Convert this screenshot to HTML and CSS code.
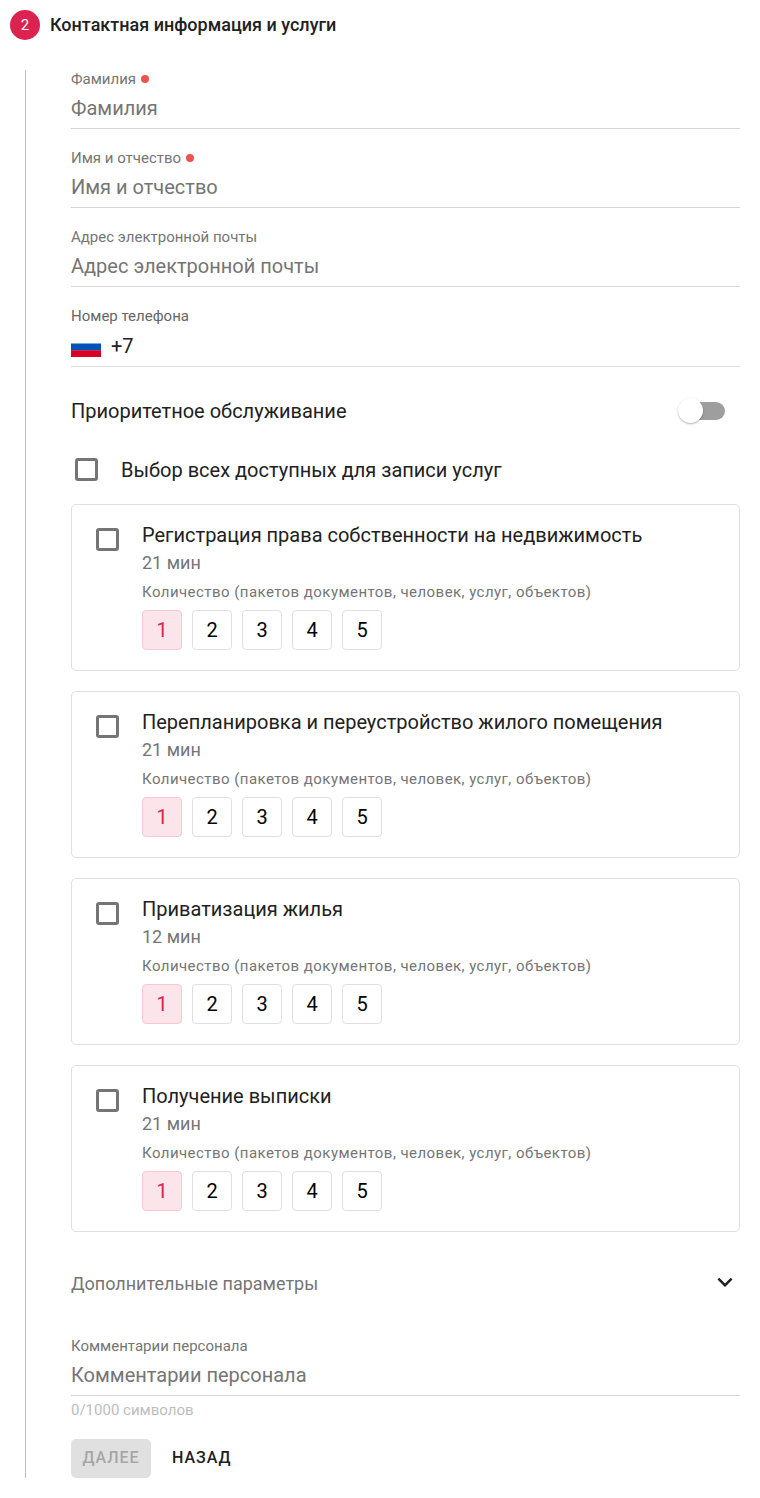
FILE: index.html
```html
<!DOCTYPE html>
<html lang="ru">
<head>
  <meta charset="utf-8" />
  <meta name="viewport" content="width=device-width, initial-scale=1.0" />
  <title>Контактная информация и услуги</title>
  <link rel="stylesheet" href="styles.css">
</head>
<body>
  <form class="step">
    <!-- Step header -->
    <div class="step-header">
      <span class="step-number">2</span>
      <h1>Контактная информация и услуги</h1>
    </div>

    <div class="step-content">
      <!-- Contact fields -->
      <div class="field">
        <label class="required" for="lastName">Фамилия</label>
        <input type="text" id="lastName" placeholder="Фамилия" />
      </div>
      <div class="field">
        <label class="required" for="firstName">Имя и отчество</label>
        <input type="text" id="firstName" placeholder="Имя и отчество" />
      </div>
      <div class="field">
        <label for="email">Адрес электронной почты</label>
        <input type="email" id="email" placeholder="Адрес электронной почты" />
      </div>
      <div class="field">
        <label class="dark" for="phone">Номер телефона</label>
        <div class="phone">
          <svg class="flag" viewBox="0 0 30 20" aria-hidden="true">
            <rect width="30" height="7" fill="#fff" />
            <rect y="6.5" width="30" height="7" fill="#0052b4" />
            <rect y="13.3" width="30" height="6.7" fill="#d80027" />
          </svg>
          <input type="tel" id="phone" value="+7" />
        </div>
      </div>

      <!-- Priority switch -->
      <div class="priority">
        <label for="priority">Приоритетное обслуживание</label>
        <input type="checkbox" class="switch" id="priority" />
      </div>

      <!-- Services -->
      <div class="select-all">
        <input type="checkbox" class="checkbox" id="selectAll" />
        <label for="selectAll">Выбор всех доступных для записи услуг</label>
      </div>

      <div class="service">
        <input type="checkbox" class="checkbox" id="service1" />
        <div class="service-info">
          <label class="service-name" for="service1">Регистрация права собственности на недвижимость</label>
          <div class="service-time">21 мин</div>
          <div class="service-hint">Количество (пакетов документов, человек, услуг, объектов)</div>
          <div class="counts">
            <button type="button" class="count active">1</button>
            <button type="button" class="count">2</button>
            <button type="button" class="count">3</button>
            <button type="button" class="count">4</button>
            <button type="button" class="count">5</button>
          </div>
        </div>
      </div>

      <div class="service">
        <input type="checkbox" class="checkbox" id="service2" />
        <div class="service-info">
          <label class="service-name" for="service2">Перепланировка и переустройство жилого помещения</label>
          <div class="service-time">21 мин</div>
          <div class="service-hint">Количество (пакетов документов, человек, услуг, объектов)</div>
          <div class="counts">
            <button type="button" class="count active">1</button>
            <button type="button" class="count">2</button>
            <button type="button" class="count">3</button>
            <button type="button" class="count">4</button>
            <button type="button" class="count">5</button>
          </div>
        </div>
      </div>

      <div class="service">
        <input type="checkbox" class="checkbox" id="service3" />
        <div class="service-info">
          <label class="service-name" for="service3">Приватизация жилья</label>
          <div class="service-time">12 мин</div>
          <div class="service-hint">Количество (пакетов документов, человек, услуг, объектов)</div>
          <div class="counts">
            <button type="button" class="count active">1</button>
            <button type="button" class="count">2</button>
            <button type="button" class="count">3</button>
            <button type="button" class="count">4</button>
            <button type="button" class="count">5</button>
          </div>
        </div>
      </div>

      <div class="service">
        <input type="checkbox" class="checkbox" id="service4" />
        <div class="service-info">
          <label class="service-name" for="service4">Получение выписки</label>
          <div class="service-time">21 мин</div>
          <div class="service-hint">Количество (пакетов документов, человек, услуг, объектов)</div>
          <div class="counts">
            <button type="button" class="count active">1</button>
            <button type="button" class="count">2</button>
            <button type="button" class="count">3</button>
            <button type="button" class="count">4</button>
            <button type="button" class="count">5</button>
          </div>
        </div>
      </div>

      <!-- Additional parameters -->
      <button type="button" class="more" aria-expanded="false">
        Дополнительные параметры
        <svg class="chevron" viewBox="0 0 24 24" aria-hidden="true">
          <path d="M7.41 7.84 12 12.42l4.59-4.58L18 9.25l-6 6-6-6z" fill="#212121" />
        </svg>
      </button>

      <div class="field">
        <label for="comment">Комментарии персонала</label>
        <input type="text" id="comment" maxlength="1000" placeholder="Комментарии персонала" />
        <div class="counter">0/1000 символов</div>
      </div>

      <div class="actions">
        <button type="submit" class="btn" disabled>ДАЛЕЕ</button>
        <button type="button" class="btn">НАЗАД</button>
      </div>
    </div>
  </form>
</body>
</html>
```

FILE: styles.css
```css
* {
  box-sizing: border-box;
}
body {
  font-family: Roboto, sans-serif;
  font-size: 20px;
  background: #fff;
  color: #212121;
  margin: 0;
}
input,
button {
  font-family: inherit;
  margin: 0;
}
button {
  cursor: pointer;
}

.step {
  padding: 10px 20px 20px 10px;
}
.step-header {
  display: flex;
  align-items: center;
  gap: 10px;
  height: 30px;
  margin-bottom: 30px;
}
.step-number {
  width: 30px;
  height: 30px;
  line-height: 30px;
  border-radius: 50%;
  background: #dc2350;
  color: #fff;
  font-size: 15px;
  text-align: center;
}
h1 {
  font-size: 18px;
  font-weight: 500;
  line-height: 28px;
  margin: 0;
}

/* Vertical connector on the left */
.step-content {
  display: flex;
  flex-direction: column;
  gap: 20px;
  margin-left: 15px;
  padding-left: 45px;
  border-left: 1px solid #bdbdbd;
}

/* Text fields */
.field label {
  display: flex;
  align-items: center;
  font-size: 15px;
  line-height: 18px;
  color: #757575;
}
.field .dark {
  color: #666;
}
.field .required::after {
  content: "";
  width: 8px;
  height: 8px;
  margin-left: 5px;
  border-radius: 50%;
  background: #ef5350;
}
.field input {
  display: block;
  width: 100%;
  height: 41px;
  padding: 0;
  border: 0;
  border-bottom: 1px solid #d6d6d6;
  background: none;
  font-size: 20px;
  color: #212121;
}
.field input::placeholder {
  color: #757575;
  opacity: 1;
}
.phone {
  display: flex;
  align-items: center;
  gap: 10px;
  border-bottom: 1px solid #e0e0e0;
}
.phone input {
  border-bottom: 0;
}
.flag {
  flex: none;
  width: 30px;
  height: 20px;
  margin-top: 3px;
}
.counter {
  margin-top: 5px;
  font-size: 15px;
  line-height: 18px;
  color: #bdbdbd;
}

/* Switch */
.priority {
  display: flex;
  align-items: center;
  justify-content: space-between;
  height: 48px;
  padding-right: 15px;
}
.switch {
  appearance: none;
  position: relative;
  width: 43px;
  height: 18px;
  border-radius: 9px;
  background: #9e9e9e;
}
.switch::before {
  content: "";
  position: absolute;
  top: -4px;
  left: -4px;
  width: 25px;
  height: 25px;
  border-radius: 50%;
  background: #fff;
  box-shadow: 0 1px 2px rgba(0,0,0,0.3);
}
.switch:checked::before {
  left: 22px;
}

/* Checkboxes */
.checkbox {
  appearance: none;
  flex: none;
  width: 23px;
  height: 23px;
  border: 3px solid #757575;
  border-radius: 3px;
}
.checkbox:checked {
  background: #dc2350;
}
.select-all {
  display: flex;
  align-items: center;
  gap: 23px;
  min-height: 29px;
  padding-left: 4px;
}

/* Service cards */
.service {
  display: flex;
  gap: 23px;
  padding: 16px 24px 20px;
  border: 1px solid #e0e0e0;
  border-radius: 5px;
}
.service .checkbox {
  margin-top: 7px;
}
.service-info {
  line-height: 28px;
}
.service-name {
  display: block;
}
.service-time {
  font-size: 18px;
  color: #757575;
}
.service-hint {
  font-size: 15px;
  line-height: 30px;
  letter-spacing: 0.03em;
  color: #757575;
}
.counts {
  display: flex;
  gap: 10px;
  margin-top: 3px;
}
.count {
  width: 40px;
  height: 40px;
  padding: 0;
  border: 1px solid #e0e0e0;
  border-radius: 4px;
  background: #fff;
  color: #000;
  font-size: 20px;
}
.count.active {
  border-color: #f8c8d3;
  background: #fbe4ea;
  color: #dc2350;
}

/* Collapsed section */
.more {
  display: flex;
  align-items: center;
  justify-content: space-between;
  height: 65px;
  padding: 0 0 3px;
  border: 0;
  background: none;
  font-size: 18px;
  color: #757575;
}
.chevron {
  width: 30px;
  height: 30px;
}

.actions {
  display: flex;
  gap: 10px;
}
.btn {
  min-width: 80px;
  height: 39px;
  padding: 0 11px 2px;
  border: 0;
  border-radius: 5px;
  background: none;
  color: #212121;
  font-size: 16px;
  font-weight: 500;
  letter-spacing: 1px;
}
.btn:disabled {
  background: #e0e0e0;
  color: #a6a6a6;
  cursor: default;
}
```
